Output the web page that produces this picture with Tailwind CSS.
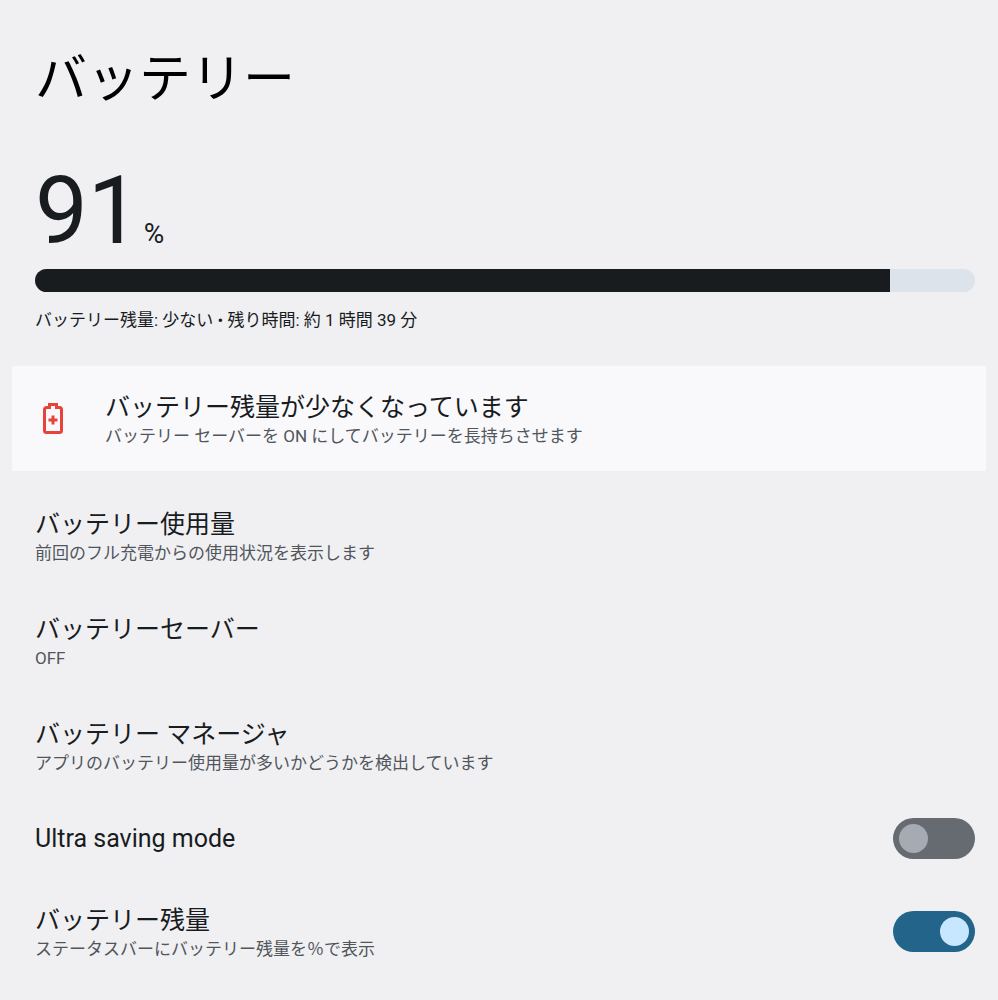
<!DOCTYPE html>
<html lang="ja">
<head>
  <meta charset="UTF-8">
  <meta name="viewport" content="width=device-width, initial-scale=1.0">
  <title>バッテリー</title>
  <script src="https://cdn.jsdelivr.net/npm/@tailwindcss/browser@4"></script>
</head>
<body class="min-h-screen bg-[#f0f0f3] px-3 font-['Roboto','Noto_Sans_CJK_JP',sans-serif] text-[#191c1e]">

  <header class="pl-[23px] pr-[11px] pt-[42px]">
    <h1 class="text-[52px] leading-[76px] text-black">バッテリー</h1>
  </header>

  <!-- Charge level -->
  <section class="pl-[23px] pr-[11px] pt-[38px] pb-[34px]">
    <p class="flex items-baseline gap-[3px]">
      <span class="text-[94px] leading-[110px]">91</span>
      <span class="text-[28px]">%</span>
    </p>
    <div class="mt-[3px] h-[23px] overflow-hidden rounded-full bg-[#dce3ea]" role="progressbar" aria-label="バッテリー残量" aria-valuenow="91" aria-valuemin="0" aria-valuemax="100">
      <div class="h-full bg-[#191c1e]" style="width: 91%"></div>
    </div>
    <p class="mt-4 text-[17px] leading-6">バッテリー残量: 少ない • 残り時間: 約 1 時間 39 分</p>
  </section>

  <main>
    <!-- Low battery tip -->
    <a href="#saver" class="mb-3 flex items-center gap-[35px] bg-[#f9f9fc] pl-[23px] pr-[11px]">
      <span class="flex w-[35px] shrink-0 justify-center">
        <svg class="h-[31px] w-5" viewBox="0 0 20 31" fill="none" stroke="#e8433a" stroke-width="3" aria-hidden="true">
          <path d="M6.5 4.5V1.5h7v3h3a2 2 0 0 1 2 2v21a2 2 0 0 1-2 2h-13a2 2 0 0 1-2-2v-21a2 2 0 0 1 2-2z" />
          <path d="M10 12.5v9M5.5 17h9" />
        </svg>
      </span>
      <span class="pt-[25px] pb-[23px]">
        <span class="block text-[25px] leading-[33px]">バッテリー残量が少なくなっています</span>
        <span class="block text-[17px] leading-6 text-[#50565b]">バッテリー セーバーを ON にしてバッテリーを長持ちさせます</span>
      </span>
    </a>

    <a href="#usage" class="block pl-[23px] pr-[11px] pt-[25px] pb-[23px]">
      <span class="block text-[25px] leading-[33px]">バッテリー使用量</span>
      <span class="block text-[17px] leading-6 text-[#50565b]">前回のフル充電からの使用状況を表示します</span>
    </a>

    <a href="#saver" class="block pl-[23px] pr-[11px] pt-[25px] pb-[23px]">
      <span class="block text-[25px] leading-[33px]">バッテリーセーバー</span>
      <span class="block text-[17px] leading-6 text-[#50565b]">OFF</span>
    </a>

    <a href="#manager" class="block pl-[23px] pr-[11px] pt-[25px] pb-[23px]">
      <span class="block text-[25px] leading-[33px]">バッテリー マネージャ</span>
      <span class="block text-[17px] leading-6 text-[#50565b]">アプリのバッテリー使用量が多いかどうかを検出しています</span>
    </a>

    <label for="ultra" class="flex items-center justify-between py-5 pl-[23px] pr-[11px]">
      <span class="text-[25px] leading-[33px]">Ultra saving mode</span>
      <input id="ultra" type="checkbox" role="switch" class="flex h-[41px] w-[82px] shrink-0 appearance-none items-center rounded-full bg-[#656b70] px-1.5 before:size-[29px] before:rounded-full before:bg-[#a6abb3] before:content-[''] checked:justify-end checked:bg-[#23648a] checked:before:bg-[#c7e7ff]">
    </label>

    <label for="percent" class="flex items-center justify-between pl-[23px] pr-[11px]">
      <span class="pt-[25px] pb-[23px]">
        <span class="block text-[25px] leading-[33px]">バッテリー残量</span>
        <span class="block text-[17px] leading-6 text-[#50565b]">ステータスバーにバッテリー残量を&#xFF05;で表示</span>
      </span>
      <input id="percent" type="checkbox" role="switch" checked class="flex h-[41px] w-[82px] shrink-0 appearance-none items-center rounded-full bg-[#656b70] px-1.5 before:size-[29px] before:rounded-full before:bg-[#a6abb3] before:content-[''] checked:justify-end checked:bg-[#23648a] checked:before:bg-[#c7e7ff]">
    </label>
  </main>

</body>
</html>
